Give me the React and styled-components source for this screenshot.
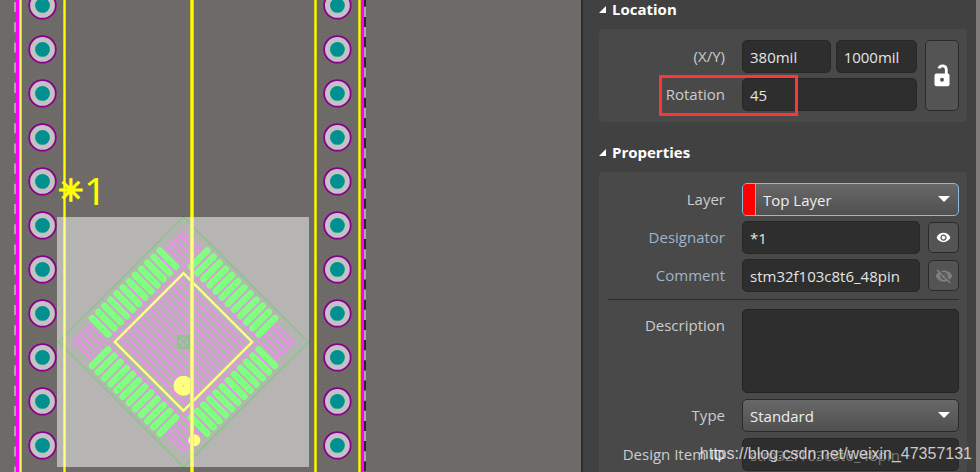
import React, { useState } from "react";
import styled, { createGlobalStyle } from "styled-components";
import { MdVisibility, MdVisibilityOff } from "react-icons/md";

const PAD_PITCH = 44;
const padRows = Array.from({ length: 30 }, (_, i) => 5.4 + i * PAD_PITCH);
const chipPins = Array.from({ length: 12 }, (_, i) => -47.8 + i * 8.69);
const hatchLines = Array.from({ length: 25 }, (_, i) => -73.2 + i * 6.1);

function PadColumn({ x }) {
  return padRows.map((y) => (
    <g key={y}>
      <circle cx={x} cy={y} r="13.3" fill="#c4c2c4" stroke="#8b008b" strokeWidth="1.8" />
      <circle cx={x} cy={y} r="7.4" fill="#009090" />
    </g>
  ));
}

function Chip() {
  return (
    <g transform="translate(183.5 342)">
      <g transform="rotate(45)" fill="none">
        <rect x="-88.3" y="-88.3" width="176.6" height="176.6" stroke="#108a10" strokeWidth="1.5" />
        <rect x="-77.6" y="-77.6" width="155.2" height="155.2" stroke="#ff00ff" strokeWidth="1.3" />
        {hatchLines.map((y) => (
          <line key={y} x1="-77.6" x2="77.6" y1={y} y2={y} stroke="#ff00ff" strokeWidth="1.6" />
        ))}
        {[0, 90, 180, 270].map((angle) => (
          <g key={angle} transform={`rotate(${angle})`}>
            {chipPins.map((y) => (
              <line
                key={y}
                x1="-81.4"
                x2="-58.7"
                y1={y}
                y2={y}
                stroke="#00ff00"
                strokeWidth="6.8"
                strokeLinecap="round"
              />
            ))}
          </g>
        ))}
        <rect x="-48.6" y="-48.6" width="97.2" height="97.2" stroke="#ffff00" strokeWidth="2.4" />
      </g>
      <g fill="none" stroke="#108a10" strokeWidth="1.3">
        <circle r="5.5" />
        <path d="M-6 -6H6V6H-6ZM-6 -6L6 6M6 -6L-6 6" />
      </g>
      <circle cy="43.7" r="10" fill="#ffff00" />
      <circle cy="43.7" r="1" fill="#c8a060" />
      <circle cx="10.8" cy="98.2" r="6" fill="#ffff00" />
    </g>
  );
}

function Board() {
  return (
    <BoardSvg role="img" aria-label="PCB layout">
      <defs>
        <pattern id="dots" x="27" y="12" width="11" height="11" patternUnits="userSpaceOnUse">
          <rect width="1" height="1" fill="#7c7977" />
        </pattern>
      </defs>
      <rect x="22" width="336" height="100%" fill="url(#dots)" />
      <line x1="15" x2="15" y1="2" y2="100%" stroke="#aaa8aa" strokeWidth="2" strokeDasharray="10.1 10.1" />
      <rect x="16" width="3" height="100%" fill="#ff00ff" />
      <rect x="19" width="3" height="100%" fill="#d2d210" />
      <rect x="20" width="1" height="100%" fill="#ffff50" />
      <PadColumn x={42.5} />
      <PadColumn x={337.4} />
      <rect x="361" width="3" height="100%" fill="#ff00ff" />
      <rect x="364" width="2" height="100%" fill="#3a1a3a" />
      <line x1="365" x2="365" y1="-13.4" y2="100%" stroke="#aaa8aa" strokeWidth="2" strokeDasharray="10.1 10.1" />
      <Chip />
      {[63, 314, 358].map((x) => (
        <g key={x}>
          <rect x={x} width="3" height="100%" fill="#d2d210" />
          <rect x={x + 1} width="1" height="100%" fill="#ffff00" />
        </g>
      ))}
      <rect x="190" width="4" height="100%" fill="#d2d210" />
      <rect x="191" width="2" height="100%" fill="#ffff00" />
      <rect x="57" y="217" width="252" height="250" fill="#ffffff" fillOpacity="0.5" />
      <text fill="#ffff00">
        <tspan x="58" y="201" fontFamily="DejaVu Sans" fontSize="30" stroke="#ffff00" strokeWidth="1.6">
          ✳
        </tspan>
        <tspan x="84" y="205" fontFamily="Noto Sans" fontSize="39">
          1
        </tspan>
      </text>
    </BoardSvg>
  );
}

function OpenLock() {
  return (
    <svg width="16" height="24" viewBox="0 0 16 24" aria-hidden="true">
      <path d="M12.3 12V5.4A3.8 3.8 0 0 0 4.9 4.4" fill="none" stroke="#fff" strokeWidth="2.8" />
      <rect x="0.5" y="9.5" width="15" height="12.7" rx="2" fill="#fff" />
      <circle cx="8" cy="15.8" r="2" fill="#545454" />
    </svg>
  );
}

function Arrow() {
  return (
    <ArrowSvg viewBox="0 0 12 6" aria-hidden="true">
      <path d="M0 0H12L6 6Z" fill="#fff" />
    </ArrowSvg>
  );
}

function SectionTitle({ children }) {
  return (
    <Title>
      <svg width="7" height="7" viewBox="0 0 7 7" aria-hidden="true">
        <path d="M7 0V7H0Z" fill="#fff" />
      </svg>
      {children}
    </Title>
  );
}

export default function App() {
  const [x, setX] = useState("380mil");
  const [y, setY] = useState("1000mil");
  const [rotation, setRotation] = useState("45");
  const [designator, setDesignator] = useState("*1");
  const [comment, setComment] = useState("stm32f103c8t6_48pin");
  const [description, setDescription] = useState("");

  return (
    <>
      <GlobalStyle />
      <Screen>
        <Board />
        <Panel>
          <section>
            <SectionTitle>Location</SectionTitle>
            <LocationCard>
              <Group>
                <Row>
                  <Label htmlFor="x">(X/Y)</Label>
                  <Fields $gap={5}>
                    <Input id="x" $grow={10} value={x} onChange={(e) => setX(e.target.value)} />
                    <Input
                      aria-label="Y"
                      $grow={9}
                      value={y}
                      onChange={(e) => setY(e.target.value)}
                    />
                  </Fields>
                </Row>
                <Row>
                  <Label htmlFor="rotation">Rotation</Label>
                  <Input id="rotation" value={rotation} onChange={(e) => setRotation(e.target.value)} />
                  <Highlight />
                </Row>
              </Group>
              <LockButton type="button" aria-label="Lock">
                <OpenLock />
              </LockButton>
            </LocationCard>
          </section>

          <section>
            <SectionTitle>Properties</SectionTitle>
            <Card>
              <Group>
                <Row>
                  <Label htmlFor="layer">Layer</Label>
                  <SelectBox $active>
                    <Swatch />
                    <Select id="layer" defaultValue="Top Layer">
                      <option>Top Layer</option>
                      <option>Bottom Layer</option>
                    </Select>
                    <Arrow />
                  </SelectBox>
                </Row>
                <Row>
                  <Label htmlFor="designator" $linked>
                    Designator
                  </Label>
                  <Fields $gap={8}>
                    <Input
                      id="designator"
                      value={designator}
                      onChange={(e) => setDesignator(e.target.value)}
                    />
                    <EyeButton type="button" aria-label="Hide designator">
                      <MdVisibility size={15} />
                    </EyeButton>
                  </Fields>
                </Row>
                <Row>
                  <Label htmlFor="comment" $linked>
                    Comment
                  </Label>
                  <Fields $gap={8}>
                    <Input id="comment" value={comment} onChange={(e) => setComment(e.target.value)} />
                    <EyeButton type="button" aria-label="Show comment" $off>
                      <MdVisibilityOff size={18} />
                    </EyeButton>
                  </Fields>
                </Row>
              </Group>
              <Divider />
              <Group $gap={6}>
                <Row $top>
                  <Label htmlFor="description">Description</Label>
                  <TextArea
                    id="description"
                    value={description}
                    onChange={(e) => setDescription(e.target.value)}
                  />
                </Row>
                <Row>
                  <Label htmlFor="type">Type</Label>
                  <SelectBox>
                    <Select id="type" defaultValue="Standard">
                      <option>Standard</option>
                      <option>Mechanical</option>
                    </Select>
                    <Arrow />
                  </SelectBox>
                </Row>
                <Row>
                  <Label htmlFor="item">Design Item ID</Label>
                  <Input id="item" value="stm32f103c8t6_48pin" readOnly $dim />
                </Row>
              </Group>
            </Card>
          </section>
        </Panel>
        <Watermark>https://blog.csdn.net/weixin_47357131</Watermark>
      </Screen>
    </>
  );
}

const GlobalStyle = createGlobalStyle`
  * {
    box-sizing: border-box;
  }

  body {
    margin: 0;
    background: #6e6a68;
  }

  body, input, select, textarea, button {
    font-family: "Open Sans", "Noto Sans", sans-serif;
    font-size: 15px;
  }
`;

const Screen = styled.main`
  position: relative;
  display: flex;
  height: 100vh;
  overflow: hidden;
`;

const BoardSvg = styled.svg`
  flex: 1;
  min-width: 0;
  height: 100%;
`;

const Panel = styled.aside`
  flex: 0 0 399px;
  display: flex;
  flex-direction: column;
  gap: 21px;
  padding: 0 9px 0 16px;
  background: #414141;
  border-left: 2px solid #2b2d2e;
  border-right: 4px solid #7f7c7b;
  overflow: hidden;
`;

const Title = styled.h2`
  display: flex;
  align-items: center;
  gap: 6px;
  margin: 0 0 11px;
  font-size: 15px;
  line-height: 18px;
  font-weight: 700;
  color: #fff;
`;

const Card = styled.div`
  padding: 11px 8px 11px 9px;
  background: #494949;
  border-radius: 4px;
`;

const LocationCard = styled(Card)`
  display: flex;
  gap: 8px;
`;

const Group = styled.div`
  flex: 1;
  min-width: 0;
  display: flex;
  flex-direction: column;
  gap: ${(props) => props.$gap || 5}px;
`;

const Row = styled.div`
  position: relative;
  display: grid;
  grid-template-columns: 117px 1fr;
  column-gap: 17px;
  align-items: ${(props) => (props.$top ? "start" : "center")};
`;

const Label = styled.label`
  line-height: 33px;
  text-align: right;
  white-space: nowrap;
  color: ${(props) => (props.$linked ? "#a0b4cc" : "#cccccc")};
`;

const Fields = styled.div`
  display: flex;
  align-items: center;
  gap: ${(props) => props.$gap}px;
  min-width: 0;
`;

const Input = styled.input`
  flex: ${(props) => props.$grow || 1} 1 0;
  width: 100%;
  min-width: 0;
  height: 33px;
  padding: 0 7px;
  color: ${(props) => (props.$dim ? "#777777" : "#e4e4e4")};
  background: #2e2e2e;
  border: 1px solid #272727;
  border-radius: 5px;
  outline: none;
`;

const TextArea = styled.textarea`
  display: block;
  width: 100%;
  height: 84px;
  padding: 6px 7px;
  color: #e4e4e4;
  background: #2e2e2e;
  border: 1px solid #222;
  border-radius: 5px;
  outline: none;
  resize: none;
`;

const SelectBox = styled.div`
  position: relative;
  display: flex;
  height: 33px;
  background: linear-gradient(#686868, #505050);
  border: 1px solid ${(props) => (props.$active ? "#8fb8e0" : "#2a2a2a")};
  border-radius: 5px;
  overflow: hidden;
`;

const Swatch = styled.span`
  flex: 0 0 13px;
  background: #ff0000;
  border-right: 1px solid #8fb8e0;
`;

const Select = styled.select`
  flex: 1;
  min-width: 0;
  padding: 0 24px 0 7px;
  color: #eeeeee;
  background: transparent;
  border: 0;
  outline: none;
  appearance: none;
`;

const ArrowSvg = styled.svg`
  position: absolute;
  right: 8px;
  top: 12px;
  width: 12px;
  height: 6px;
  pointer-events: none;
`;

const IconButton = styled.button`
  display: flex;
  align-items: center;
  justify-content: center;
  padding: 0;
  color: #fff;
  background: #545454;
  border: 1px solid #2a2a2a;
  border-radius: 5px;
`;

const LockButton = styled(IconButton)`
  flex: 0 0 34px;
`;

const EyeButton = styled(IconButton)`
  flex: 0 0 31px;
  height: 31px;
  color: ${(props) => (props.$off ? "#808080" : "#ffffff")};
`;

const Highlight = styled.div`
  position: absolute;
  top: -3px;
  left: 51px;
  width: 139px;
  height: 41px;
  border: 3px solid #ff3636;
  pointer-events: none;
`;

const Divider = styled.hr`
  height: 1px;
  margin: 7px 0 9px;
  background: #2c2c2c;
  border: 0;
`;

const Watermark = styled.div`
  position: absolute;
  right: 8px;
  bottom: 8px;
  font-family: "Liberation Sans", Arial, sans-serif;
  font-size: 16px;
  line-height: 20px;
  color: rgba(255, 255, 255, 0.75);
  pointer-events: none;
`;
